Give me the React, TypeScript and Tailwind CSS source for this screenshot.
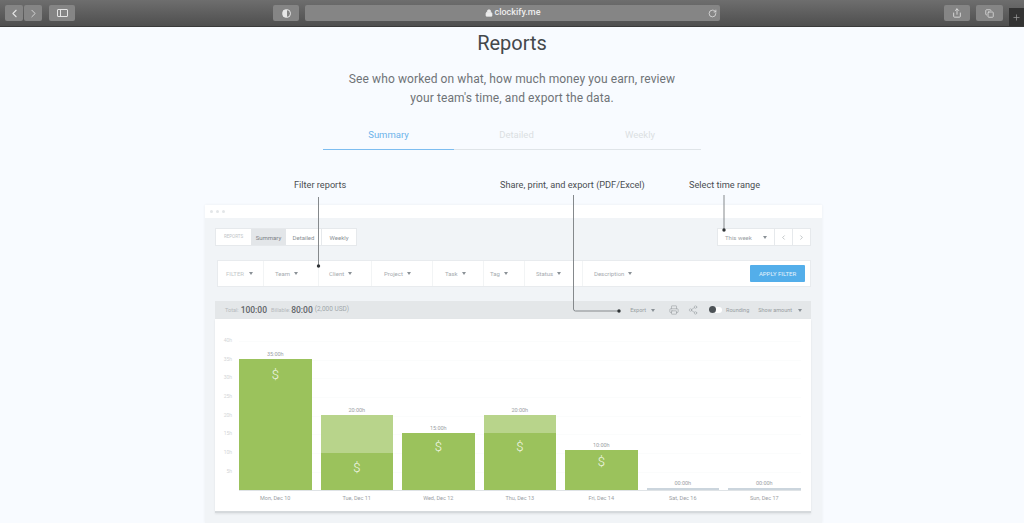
import { ChevronLeft, ChevronRight, Copy, Lock, Plus, Printer, RotateCw, Share, Share2 } from 'lucide-react'

const yLabels = ['40h', '35h', '30h', '25h', '20h', '15h', '10h', '5h']

const days = [
    { label: 'Mon, Dec 10', time: '35:00h', billable: 131, light: 0, iconTop: 'pt-[8px]' },
    { label: 'Tue, Dec 11', time: '20:00h', billable: 37, light: 38, iconTop: 'pt-[7px]' },
    { label: 'Wed, Dec 12', time: '15:00h', billable: 57, light: 0, iconTop: 'pt-[6px]' },
    { label: 'Thu, Dec 13', time: '20:00h', billable: 57, light: 18, iconTop: 'pt-[6px]' },
    { label: 'Fri, Dec 14', time: '10:00h', billable: 40, light: 0, iconTop: 'pt-[4px]' },
    { label: 'Sat, Dec 16', time: '00:00h', billable: 0, light: 0, iconTop: '' },
    { label: 'Sun, Dec 17', time: '00:00h', billable: 0, light: 0, iconTop: '' },
]

const filters = [
    { name: 'Team', w: 'w-[55px] pl-[11px]' },
    { name: 'Client', w: 'w-[53px] pl-[10px]' },
    { name: 'Project', w: 'w-[61px] pl-[12px]' },
    { name: 'Task', w: 'w-[51px] pl-[12px]' },
    { name: 'Tag', w: 'w-[41px] pl-[6px]' },
    { name: 'Status', w: 'w-[58px] pl-[11px]' },
    { name: 'Description', w: 'w-[90px] pl-[11px]' },
]

function Caret({ className = '' }: { className?: string }) {
    return (
        <span
            className={`inline-block w-0 h-0 border-x-[2.5px] border-x-transparent border-t-[3px] border-t-[#8a9196] ${className}`}
        />
    )
}

function ToolbarButton({ className = '', children }: { className?: string; children?: React.ReactNode }) {
    return (
        <div className={`h-[16px] rounded-[2px] bg-[#858585] flex items-center justify-center text-[#e4e4e4] ${className}`}>
            {children}
        </div>
    )
}

function BrowserBar() {
    return (
        <div className="relative h-[27px] shrink-0 flex items-center pl-[5px] bg-gradient-to-b from-[#6e6e6e] to-[#4f4f4f] border-b border-[#3a3a3a]">
            <ToolbarButton className="w-[18px]">
                <ChevronLeft size={13} strokeWidth={2} />
            </ToolbarButton>
            <ToolbarButton className="w-[18px] ml-px text-[#a5a5a5]">
                <ChevronRight size={13} strokeWidth={1.5} />
            </ToolbarButton>
            <ToolbarButton className="w-[26px] ml-[7px]">
                <div className="w-[11px] h-[8px] border border-[#e4e4e4] rounded-[1px] flex">
                    <div className="w-[3px] border-r border-[#e4e4e4]" />
                </div>
            </ToolbarButton>
            <ToolbarButton className="w-[26px] ml-[198px]">
                <div className="w-[9px] h-[9px] rounded-full border border-[#e8e8e8] bg-gradient-to-r from-[#e8e8e8] from-50% to-transparent to-50%" />
            </ToolbarButton>
            <ToolbarButton className="w-[415px] ml-[6px] relative">
                <div className="flex items-center gap-[2px] text-[9px] text-[#ececec] font-medium">
                    <Lock size={8} fill="currentColor" />
                    <span>clockify.me</span>
                </div>
                <RotateCw size={9} className="absolute right-[3px]" />
            </ToolbarButton>
            <ToolbarButton className="w-[26px] ml-[224px]">
                <Share size={10} />
            </ToolbarButton>
            <ToolbarButton className="w-[27px] ml-[6px]">
                <Copy size={9} />
            </ToolbarButton>
            <div className="absolute right-0 bottom-0 w-[15px] h-[18px] bg-[#333333] flex items-center justify-center text-[#9a9a9a]">
                <Plus size={9} />
            </div>
        </div>
    )
}

function AppTabs() {
    return (
        <div className="flex items-center h-[18px] ml-[10px] w-[142px] bg-white border border-[#e6e9ec] text-[6px] text-[#8b9195]">
            <span className="w-[35px] text-center text-[4.5px] text-[#c0c4c7]">REPORTS</span>
            <span className="w-[35px] h-full flex items-center justify-center bg-[#e3e6e9] text-[#7b8185]">Summary</span>
            <span className="w-[35px] text-center">Detailed</span>
            <span className="w-[35px] text-center border-l border-[#e6e9ec] h-full flex items-center justify-center">Weekly</span>
        </div>
    )
}

function DateRange() {
    return (
        <div className="flex items-center h-[18px] w-[94px] bg-white border border-[#e6e9ec] text-[6px] text-[#9aa0a4]">
            <span className="flex-1 pl-[7px]">This week</span>
            <Caret className="mr-[7px]" />
            <span className="w-[18px] h-full border-l border-[#e6e9ec] flex items-center justify-center">
                <ChevronLeft size={7} />
            </span>
            <span className="w-[18px] h-full border-l border-[#e6e9ec] flex items-center justify-center">
                <ChevronRight size={7} />
            </span>
        </div>
    )
}

function FilterBar() {
    return (
        <div className="flex items-center h-[27px] ml-[12px] w-[594px] bg-white border border-[#e8ebee] text-[6px] text-[#a6abaf]">
            <div className="w-[45px] flex items-center pl-[8px] text-[#c4c8ca]">
                FILTER
                <Caret className="ml-[5px]" />
            </div>
            {filters.map(f => (
                <div key={f.name} className={`${f.w} h-full border-l border-[#f2f4f5] flex items-center gap-[4px]`}>
                    {f.name}
                    <Caret />
                </div>
            ))}
            <div className="ml-auto mr-[5px] w-[55px] h-[17px] rounded-[1px] bg-[#53aeea] text-[#e6f3fc] text-[6px] flex items-center justify-center">
                APPLY FILTER
            </div>
        </div>
    )
}

function SummaryBar() {
    return (
        <div className="flex items-center h-[18px] pl-[10px] bg-[#e4e7e9] text-[5.5px] text-[#b4b9bc]">
            <span>Total:</span>
            <span className="ml-[2px] text-[8.5px] font-medium text-[#5f6468]">100:00</span>
            <span className="ml-[4px]">Billable:</span>
            <span className="ml-[1px] text-[8.5px] font-medium text-[#5f6468]">80:00</span>
            <span className="ml-[2px] text-[6.5px] text-[#a2a7ab]">(2,000 USD)</span>
            <div className="ml-auto flex items-center text-[#979da1] text-[5.5px]">
                <span>Export</span>
                <Caret className="ml-[5px]" />
                <Printer size={10} strokeWidth={1.4} className="ml-[14px]" />
                <Share2 size={10} strokeWidth={1.2} className="ml-[9px]" />
                <div className="relative ml-[11px] w-[13px] h-[6px] rounded-full bg-white">
                    <div className="absolute left-0 -top-px w-[7px] h-[7px] rounded-full bg-[#4c5256]" />
                </div>
                <span className="ml-[4px]">Rounding</span>
                <span className="ml-[9px]">Show amount</span>
                <Caret className="ml-[6px] mr-[9px]" />
            </div>
        </div>
    )
}

function Chart() {
    return (
        <div className="flex h-[194px] pt-[16px] bg-white border-b-2 border-[#d5d9dc] shadow-[0_1px_2px_rgba(0,0,0,0.08)]">
            <div className="w-[24px] shrink-0 text-[5px] text-[#d2d5d7]">
                {yLabels.map(l => (
                    <div key={l} className="h-[18.7px] pr-[7px] text-right leading-[10px]">{l}</div>
                ))}
            </div>
            <div className="relative flex-1 mr-[10px] h-[156px]">
                <div className="absolute inset-x-0 top-[6px] flex flex-col">
                    {yLabels.map(l => (
                        <div key={l} className="h-[18.7px] border-t border-[#fbfcfc]" />
                    ))}
                </div>
                <div className="relative flex h-full items-end gap-[9px] border-b border-[#dfe3e6]">
                    {days.map(d => (
                        <div key={d.label} className="w-[72.5px] flex flex-col items-center">
                            <span className="text-[5.5px] leading-[10px] text-[#9ba0a4]">{d.time}</span>
                            {d.light > 0 && <div className="w-full bg-[#b8d48b]" style={{ height: d.light }} />}
                            {d.billable > 0 ? (
                                <div className={`w-full bg-[#9bc25c] text-center text-[#f2f7e8] font-light text-[13px] leading-[15px] ${d.iconTop}`} style={{ height: d.billable }}>
                                    $
                                </div>
                            ) : (
                                <div className="w-full h-[2px] bg-[#cbd5dd]" />
                            )}
                        </div>
                    ))}
                </div>
                <div className="flex gap-[9px] pt-[1px]">
                    {days.map(d => (
                        <span key={d.label} className="w-[72.5px] text-center text-[5.5px] leading-[12px] text-[#9ba0a4]">
                            {d.label}
                        </span>
                    ))}
                </div>
            </div>
        </div>
    )
}

// leader lines from the captions down to the thing they describe
function Callouts() {
    return (
        <svg className="absolute left-0 top-0 pointer-events-none" width={1024} height={523} fill="none">
            <g stroke="#85898c" strokeWidth={1}>
                <path d="M318.5 197V266" />
                <path d="M573.5 195V309a2 2 0 0 0 2 2H619" />
                <path d="M724 195V230" />
            </g>
            <g fill="#2f3336">
                <circle cx={318.5} cy={266} r={1.7} />
                <circle cx={619} cy={311} r={1.7} />
                <circle cx={724} cy={230} r={1.7} />
            </g>
        </svg>
    )
}

export default function App() {
    return (
        <div className="relative w-[1024px] h-[523px] overflow-hidden flex flex-col bg-[#f8fbff] font-['Roboto',sans-serif]">
            <BrowserBar />
            <div className="flex flex-col items-center">
                <h1 className="mt-[2px] text-[20px] leading-[28px] text-[#44484b]">Reports</h1>
                <p className="mt-[13px] text-[12px] leading-[19px] text-center text-[#6f7377] tracking-[0.1px]">
                    See who worked on what, how much money you earn, review
                    <br />
                    your team's time, and export the data.
                </p>
            </div>
            <div className="flex w-[378px] ml-[323px] mt-[20px] h-[22px] text-[9.5px] text-center border-b border-[#dfe4e8] text-[#dbdfe2]">
                <div className="w-[131px] -mb-px border-b border-[#7dbdf0] text-[#6db3ea]">Summary</div>
                <div className="w-[125px]">Detailed</div>
                <div className="w-[122px]">Weekly</div>
            </div>
            <div className="flex mt-[28px] ml-[294px] text-[9.2px] leading-[14px] text-[#4a4e52]">
                <span className="w-[206px]">Filter reports</span>
                <span className="w-[189px]">Share, print, and export (PDF/Excel)</span>
                <span>Select time range</span>
            </div>
            <div className="ml-[205px] mt-[13px] w-[617px] flex-1 bg-[#f1f4f7] shadow-[0_0_3px_rgba(0,0,0,0.06)]">
                <div className="h-[13px] bg-white flex items-center gap-[3px] pl-[5px]">
                    <span className="w-[3px] h-[3px] rounded-full bg-[#e3e6e8]" />
                    <span className="w-[3px] h-[3px] rounded-full bg-[#e3e6e8]" />
                    <span className="w-[3px] h-[3px] rounded-full bg-[#e3e6e8]" />
                </div>
                <div className="flex justify-between items-center mt-[10px] pr-[11px]">
                    <AppTabs />
                    <DateRange />
                </div>
                <div className="mt-[14px]">
                    <FilterBar />
                </div>
                <div className="mt-[14px] ml-[10px] w-[596px]">
                    <SummaryBar />
                    <Chart />
                </div>
            </div>
            <Callouts />
        </div>
    )
}
